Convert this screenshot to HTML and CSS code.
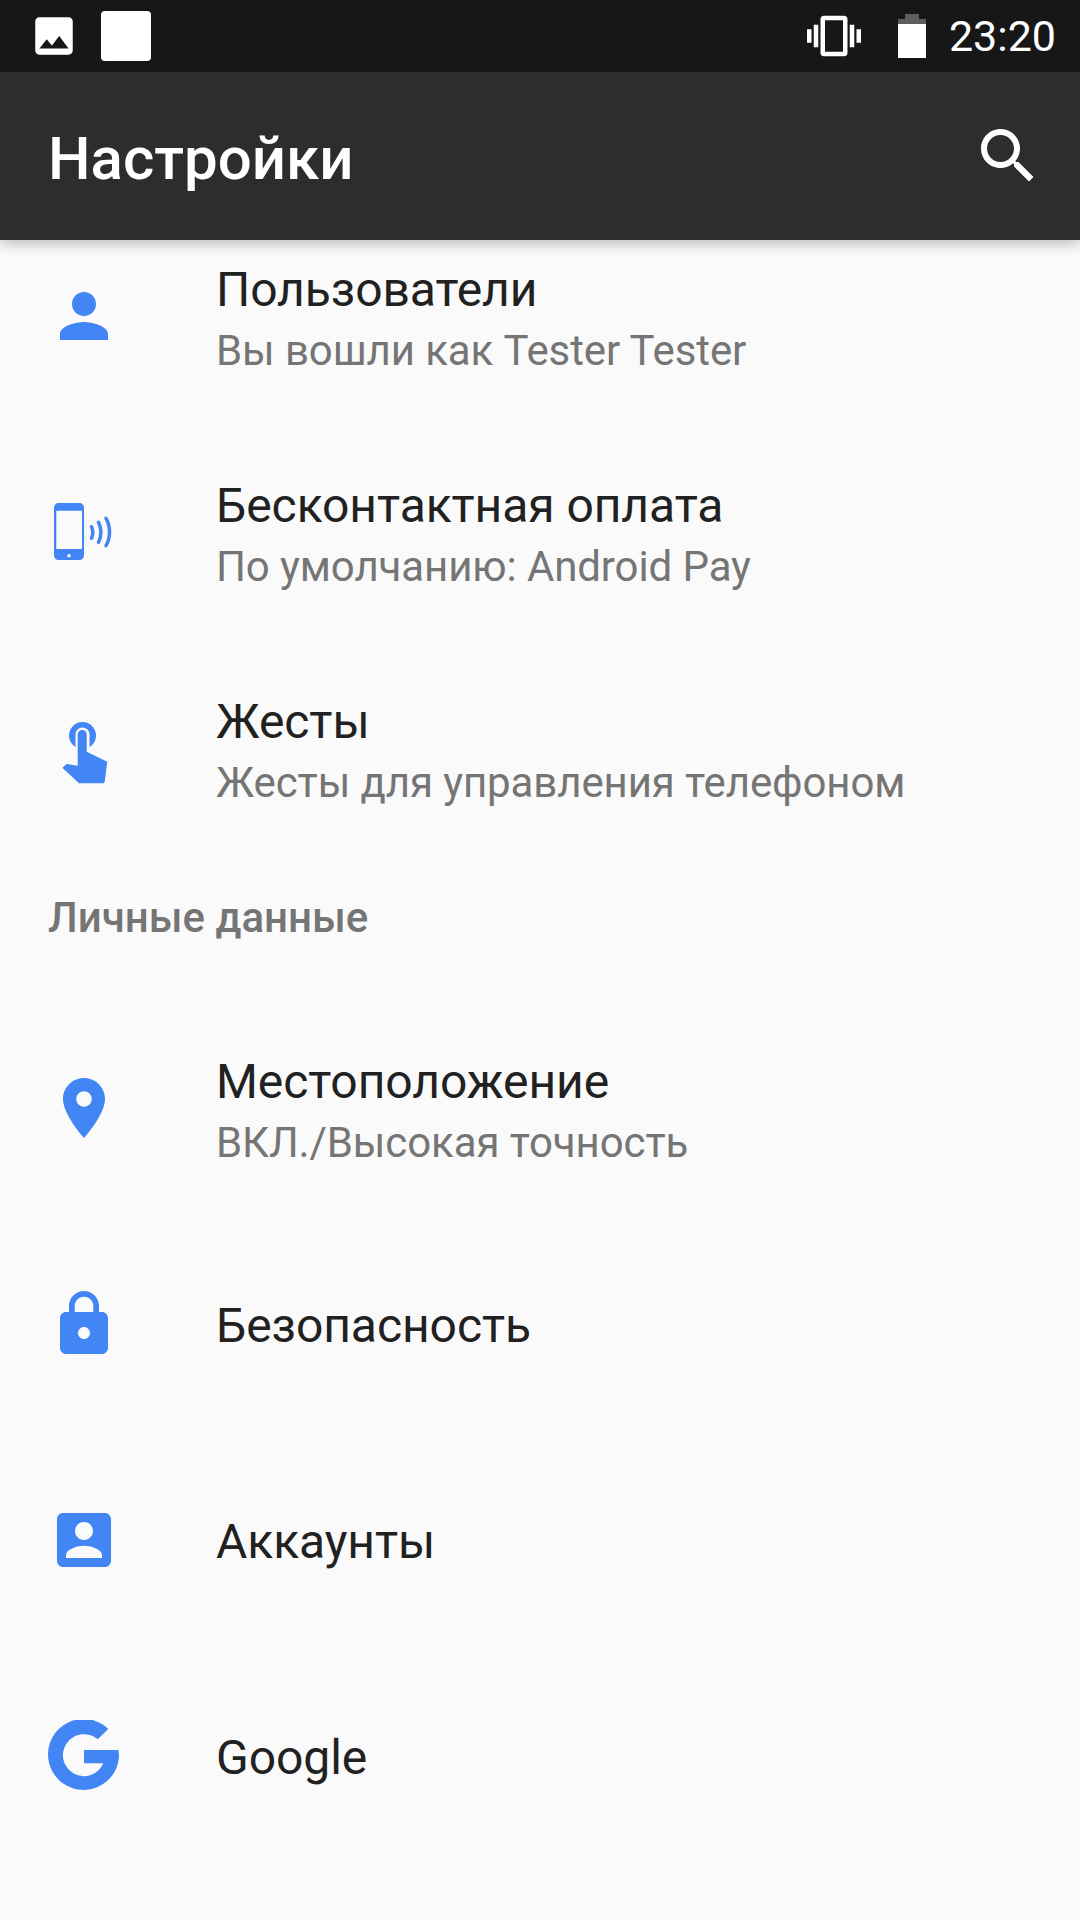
FILE: index.html
```html
<!DOCTYPE html>
<html lang="ru">
<head>
<meta charset="utf-8">
<title>Настройки</title>
<link rel="stylesheet" href="styles.css">
</head>
<body>
<div class="screen">
  <header class="appbar">
    <div class="status">
      <div class="status-left">
        <svg class="ic-image" viewBox="0 0 24 24"><path d="M21 19V5c0-1.1-.9-2-2-2H5c-1.1 0-2 .9-2 2v14c0 1.1.9 2 2 2h14c1.1 0 2-.9 2-2zM8.5 13.5l2.5 3.01L14.5 12l4.5 6H5l3.5-4.5z"/></svg>
        <span class="blank-note"></span>
      </div>
      <div class="status-right">
        <svg class="ic-vibrate" viewBox="0 0 24 24"><path d="M0 15h2V9H0v6zm3 2h2V7H3v10zm19-8v6h2V9h-2zm-3 8h2V7h-2v10zM16.5 3h-9C6.67 3 6 3.67 6 4.5v15c0 .83.67 1.5 1.5 1.5h9c.83 0 1.5-.67 1.5-1.5v-15c0-.83-.67-1.5-1.5-1.5zM16 19H8V5h8v14z"/></svg>
        <svg class="ic-battery" viewBox="0 0 28 44"><path class="batt-empty" d="M7 0h14v5h7v5H0V5h7z"/><path d="M0 10h28v34H0z"/></svg>
        <span class="clock">23:20</span>
      </div>
    </div>
    <div class="toolbar">
      <h1 class="toolbar-title">Настройки</h1>
      <svg class="ic-search" viewBox="0 0 24 24"><path d="M15.5 14h-.79l-.28-.27C15.41 12.59 16 11.11 16 9.5 16 5.91 13.09 3 9.5 3S3 5.91 3 9.5 5.91 16 9.5 16c1.61 0 3.09-.59 4.23-1.57l.27.28v.79l5 4.99L20.49 19l-4.99-5zm-6 0C7.01 14 5 11.99 5 9.5S7.01 5 9.5 5 14 7.01 14 9.5 11.99 14 9.5 14z"/></svg>
    </div>
  </header>
  <main class="list">
    <div class="row">
      <svg class="row-icon" viewBox="0 0 24 24"><path d="M12 12c2.21 0 4-1.79 4-4s-1.79-4-4-4-4 1.79-4 4 1.79 4 4 4zm0 2c-2.67 0-8 1.34-8 4v2h16v-2c0-2.66-5.33-4-8-4z"/></svg>
      <div class="row-text"><div class="row-title">Пользователи</div><div class="row-sub">Вы вошли как Tester Tester</div></div>
    </div>
    <div class="row">
      <svg class="row-icon" viewBox="0 0 72 72">
        <path fill-rule="evenodd" d="M11 7h20c3 0 5 2 5 5v47c0 3-2 5-5 5H11c-3 0-5-2-5-5V12c0-3 2-5 5-5zM8.300 14.700V53H34V14.700zM21 58a1.800 1.800 0 1 0 0 3.600 1.800 1.800 0 0 0 0-3.600z"/>
        <path class="wave" d="M43.500 30.700c1.600 3.600 1.600 8 0 11.600M50.500 26.300c3.200 6 3.200 14 0 20M58 22.300c4.700 8 4.700 19.400 0 27.400"/>
      </svg>
      <div class="row-text"><div class="row-title">Бесконтактная оплата</div><div class="row-sub">По умолчанию: Android Pay</div></div>
    </div>
    <div class="row">
      <svg class="row-icon" viewBox="0 0 72 72">
        <circle cx="34.500" cy="23.500" r="13.500"/>
        <path class="halo" d="M27.500 40V22.500a7 7 0 0 1 14 0V40z"/>
        <path d="M29.700 22.500a4.500 4.500 0 0 1 9 0v17.200l20.600 10-2.600 20c-.2 1-1.300 1.600-3 1.600H31L14.300 55.700l4.400-3.700 11 1.700z"/>
      </svg>
      <div class="row-text"><div class="row-title">Жесты</div><div class="row-sub">Жесты для управления телефоном</div></div>
    </div>
    <h2 class="section">Личные данные</h2>
    <div class="row">
      <svg class="row-icon" viewBox="0 0 24 24"><path fill-rule="evenodd" d="M12 2C8.130 2 5 5.130 5 9c0 5.250 7 13 7 13s7-7.750 7-13c0-3.870-3.130-7-7-7zm0 4.400a2.600 2.600 0 1 0 0 5.200 2.600 2.600 0 0 0 0-5.200z"/></svg>
      <div class="row-text"><div class="row-title">Местоположение</div><div class="row-sub">ВКЛ./Высокая точность</div></div>
    </div>
    <div class="row">
      <svg class="row-icon" viewBox="0 0 24 24"><path d="M18 8h-1V6c0-2.760-2.240-5-5-5S7 3.240 7 6v2H6c-1.100 0-2 .9-2 2v10c0 1.100.9 2 2 2h12c1.100 0 2-.9 2-2V10c0-1.100-.9-2-2-2zm-6 9c-1.100 0-2-.9-2-2s.9-2 2-2 2 .9 2 2-.9 2-2 2zm3.100-9H8.900V6c0-1.710 1.390-3.100 3.100-3.100 1.710 0 3.100 1.390 3.100 3.100v2z"/></svg>
      <div class="row-text single"><div class="row-title">Безопасность</div></div>
    </div>
    <div class="row">
      <svg class="row-icon" viewBox="0 0 24 24"><path d="M3 5v14c0 1.100.89 2 2 2h14c1.100 0 2-.9 2-2V5c0-1.100-.9-2-2-2H5c-1.110 0-2 .9-2 2zm12 4c0 1.660-1.340 3-3 3s-3-1.340-3-3 1.340-3 3-3 3 1.340 3 3zm-9 8c0-2 4-3.100 6-3.100s6 1.100 6 3.100v1H6v-1z"/></svg>
      <div class="row-text single"><div class="row-title">Аккаунты</div></div>
    </div>
    <div class="row">
      <svg class="row-icon" viewBox="0 0 72 72"><path d="M70.300 30H36v13.300h19.300A21 21 0 1 1 49.700 19.300L60.300 9A35.500 35.500 0 1 0 71 36c0-2.500-.3-4.500-.7-6z"/></svg>
      <div class="row-text single"><div class="row-title">Google</div></div>
    </div>
  </main>
</div>
</body>
</html>
```
FILE: styles.css
```css
* { box-sizing: border-box; }
html, body { margin: 0; padding: 0; }
body { font-family: Roboto, "Noto Sans", sans-serif; background: #fafafa; }
.screen { width: 1080px; height: 1920px; overflow: hidden; background: #fafafa; }
.appbar { position: relative; z-index: 2; box-shadow: 0 3px 14px rgba(0, 0, 0, .28); }
.status { height: 72px; background: #171717; display: flex; justify-content: space-between; align-items: center; color: #fff; }
.status svg { fill: #fff; display: block; }
.status-left { display: flex; align-items: center; padding-left: 29px; }
.ic-image { width: 50px; height: 50px; }
.blank-note { width: 50px; height: 50px; border-radius: 4px; background: #fff; margin-left: 22px; }
.status-right { display: flex; align-items: center; padding-right: 24px; }
.ic-vibrate { width: 54px; height: 54px; }
.ic-battery { width: 28px; height: 44px; margin-left: 37px; }
.batt-empty { fill: #5f5f5f; }
.clock { font-size: 43px; line-height: 72px; margin-left: 23px; }
.toolbar { height: 168px; background: #2d2d2d; display: flex; align-items: center; justify-content: space-between; padding: 0 36px 0 48px; }
.toolbar-title { margin: 0; padding-top: 5px; font-size: 60px; font-weight: 500; color: #fff; line-height: 72px; }
.ic-search { width: 72px; height: 72px; fill: #fff; display: block; }
.list { margin-top: -32px; }
.row { height: 216px; display: flex; align-items: center; padding-left: 48px; }
.row-icon { width: 72px; height: 72px; flex: none; fill: #4285f4; display: block; }
.wave { fill: none; stroke: #4285f4; stroke-width: 3.5; stroke-linecap: round; }
.halo { fill: #fafafa; }
.row-text { margin-left: 96px; padding-top: 6px; }
.row-text.single { padding-top: 4px; }
.row-title { font-size: 48px; line-height: 64px; color: #212121; letter-spacing: -.06px; }
.row-sub { font-size: 42px; line-height: 58px; color: #757575; letter-spacing: -.1px; }
.section { margin: 0; height: 144px; padding: 33px 0 0 48px; font-size: 42px; line-height: 58px; font-weight: 500; color: #757575; }
```
